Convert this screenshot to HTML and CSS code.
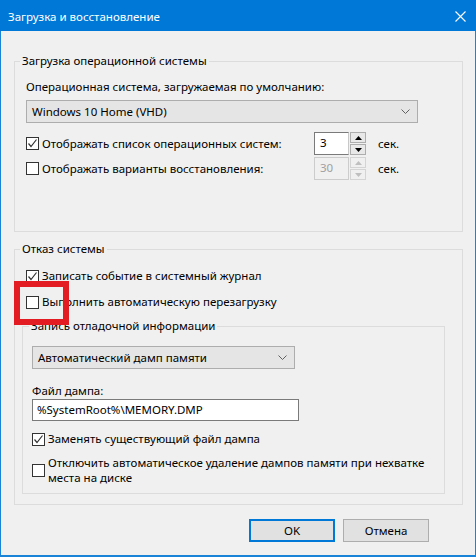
FILE: index.html
```html
<!DOCTYPE html>
<html lang="ru">
<head>
<meta charset="utf-8">
<title>Загрузка и восстановление</title>
<link rel="stylesheet" href="styles.css">
</head>
<body>
<div class="window">
  <div class="titlebar">
    <span class="title">Загрузка и восстановление</span>
    <svg class="close" width="11" height="11" viewBox="0 0 11 11"><path d="M0.5 0.5 L10.5 10.5 M10.5 0.5 L0.5 10.5" stroke="#fff" stroke-width="1.1" fill="none"/></svg>
  </div>
  <div class="content">
    <div class="group g1">
      <div class="legend">Загрузка операционной системы</div>
      <div class="label l-os">Операционная система, загружаемая по умолчанию:</div>
      <div class="combo wide">
        <span>Windows 10 Home (VHD)</span>
        <svg class="chev" width="9" height="5" viewBox="0 0 9 5"><path d="M0.5 0.5 L4.5 4.5 L8.5 0.5" stroke="#606060" fill="none"/></svg>
      </div>
      <div class="srow r1">
        <span class="cb checked"><svg width="11" height="11" viewBox="0 0 11 11"><path d="M1.5 5.5 L4 8.5 L9.5 1.5" stroke="#333" stroke-width="1.2" fill="none"/></svg></span>
        <span class="slabel">Отображать список операционных систем:</span>
        <span class="spin">
          <span class="spin-val">3</span>
          <span class="spin-btns">
            <span class="sbtn"><svg width="7" height="4" viewBox="0 0 7 4"><path d="M0 4 L3.5 0 L7 4Z" fill="#000"/></svg></span>
            <span class="sbtn"><svg width="7" height="4" viewBox="0 0 7 4"><path d="M0 0 L3.5 4 L7 0Z" fill="#000"/></svg></span>
          </span>
        </span>
        <span class="unit">сек.</span>
      </div>
      <div class="srow r2">
        <span class="cb"></span>
        <span class="slabel">Отображать варианты восстановления:</span>
        <span class="spin disabled">
          <span class="spin-val">30</span>
          <span class="spin-btns">
            <span class="sbtn"><svg width="7" height="4" viewBox="0 0 7 4"><path d="M0 4 L3.5 0 L7 4Z" fill="#bfbfbf"/></svg></span>
            <span class="sbtn"><svg width="7" height="4" viewBox="0 0 7 4"><path d="M0 0 L3.5 4 L7 0Z" fill="#bfbfbf"/></svg></span>
          </span>
        </span>
        <span class="unit">сек.</span>
      </div>
    </div>

    <div class="group g2">
      <div class="legend">Отказ системы</div>
      <div class="crow c1">
        <span class="cb checked"><svg width="11" height="11" viewBox="0 0 11 11"><path d="M1.5 5.5 L4 8.5 L9.5 1.5" stroke="#333" stroke-width="1.2" fill="none"/></svg></span>
        <span>Записать событие в системный журнал</span>
      </div>
      <div class="crow c2">
        <span class="cb"></span>
        <span>Выполнить автоматическую перезагрузку</span>
        <span class="highlight"></span>
      </div>
      <div class="group sub">
        <div class="legend">Запись отладочной информации</div>
        <div class="combo narrow">
          <span>Автоматический дамп памяти</span>
          <svg class="chev" width="9" height="5" viewBox="0 0 9 5"><path d="M0.5 0.5 L4.5 4.5 L8.5 0.5" stroke="#606060" fill="none"/></svg>
        </div>
        <div class="label l-file">Файл дампа:</div>
        <div class="textbox">%SystemRoot%\MEMORY.DMP</div>
        <div class="crow c3">
          <span class="cb checked"><svg width="11" height="11" viewBox="0 0 11 11"><path d="M1.5 5.5 L4 8.5 L9.5 1.5" stroke="#333" stroke-width="1.2" fill="none"/></svg></span>
          <span>Заменять существующий файл дампа</span>
        </div>
        <div class="crow c4">
          <span class="cb"></span>
          <span class="multi">Отключить автоматическое удаление дампов памяти при нехватке места на диске</span>
        </div>
      </div>
    </div>

    <div class="buttons">
      <span class="btn default">OK</span>
      <span class="btn">Отмена</span>
    </div>
  </div>
</div>
</body>
</html>
```
FILE: styles.css
```css
html, body {
  margin: 0;
  padding: 0;
  background: #f0f0f0;
}
body {
  font-family: "Segoe UI", "Noto Sans", "Open Sans", sans-serif;
  font-size: 11.5px;
  color: #000;
}
.window {
  width: 476px;
  height: 557px;
  box-sizing: border-box;
  border: 1px solid #1883d7;
  border-top: none;
  border-bottom-width: 2px;
  background: #f0f0f0;
  display: flex;
  flex-direction: column;
}
.titlebar {
  height: 31px;
  background: #0078d7;
  color: #fff;
  display: flex;
  align-items: center;
  justify-content: space-between;
  padding: 0 10px 0 8px;
  margin: 0 -1px;
  font-size: 11.5px;
}
.title { padding-top: 1px; }
.close { margin-top: 1px; }
.content {
  padding: 30px 12px 0 13px;
  display: flex;
  flex-direction: column;
}
.group {
  border: 1px solid #dcdcdc;
}
.legend {
  display: table;
  background: #f0f0f0;
  line-height: 16px;
  height: 16px;
  padding: 0 2px;
  margin-top: -9px;
}
.g1 {
  padding: 0 11px 51px 11px;
}
.g1 > .legend { margin-left: -6px; }
.label { line-height: 16px; }
.l-os { margin-top: 10px; }
.combo {
  height: 23px;
  box-sizing: border-box;
  border: 1px solid #adadad;
  background: #e5e5e5;
  display: flex;
  align-items: center;
  justify-content: space-between;
  padding: 0 7px 0 5px;
}
.combo.wide { margin-top: 5px; width: 392px; }
.srow {
  display: flex;
  align-items: center;
  height: 23px;
}
.r1 { margin-top: 9px; }
.r2 { margin-top: 2px; }
.cb {
  width: 13px;
  height: 13px;
  box-sizing: border-box;
  border: 1px solid #333;
  background: #fff;
  display: inline-flex;
  align-items: center;
  justify-content: center;
  flex: none;
}
.slabel {
  margin-left: 3px;
  width: 272px;
}
.spin {
  display: flex;
  width: 52px;
  height: 23px;
  gap: 1px;
}
.spin-val {
  width: 35px;
  box-sizing: border-box;
  border: 1px solid #7a7a7a;
  border-right-color: #c8c8c8;
  background: #fff;
  padding: 2px 0 0 5px;
  line-height: 16px;
}
.spin-btns {
  display: flex;
  flex-direction: column;
  gap: 1px;
  width: 16px;
}
.sbtn {
  flex: 1;
  box-sizing: border-box;
  border: 1px solid #adadad;
  background: #e8e8e8;
  display: flex;
  align-items: center;
  justify-content: center;
}
.spin.disabled .spin-val {
  border-color: #cccccc;
  background: #f0f0f0;
  color: #a0a0a0;
}
.spin.disabled .sbtn {
  border-color: #d4d4d4;
  background: #f0f0f0;
}
.unit { margin-left: 12px; }

.g2 {
  margin-top: 17px;
  padding: 0 17px 10px 7px;
}
.g2 > .legend { margin-left: -2px; }
.crow {
  display: flex;
  align-items: center;
  gap: 3px;
  line-height: 16px;
  position: relative;
}
.g2 > .crow { margin-left: 4px; }
.c1 { margin-top: 11px; }
.c2 { margin-top: 10px; }
.highlight {
  position: absolute;
  left: -12px;
  top: -13px;
  width: 55px;
  height: 44px;
  box-sizing: border-box;
  border: 6px solid #e31b23;
  pointer-events: none;
}
.sub {
  margin-top: 16px;
  padding: 0 9px 8px 9px;
}
.sub > .legend { margin-left: -3px; }
.combo.narrow { margin-top: 12px; width: 263px; }
.l-file { margin-top: 14px; }
.textbox {
  width: 267px;
  height: 22px;
  box-sizing: border-box;
  border: 1px solid #7a7a7a;
  background: #fff;
  padding: 2px 0 0 4px;
  line-height: 16px;
}
.c3 { margin-top: 10px; }
.c4 { margin-top: 8px; }
.multi { line-height: 15px; width: 392px; }

.buttons {
  display: flex;
  gap: 8px;
  margin-top: 14px;
  padding-left: 235px;
}
.btn {
  width: 86px;
  height: 23px;
  box-sizing: border-box;
  border: 1px solid #adadad;
  background: #e1e1e1;
  display: flex;
  align-items: center;
  justify-content: center;
}
.btn.default {
  border: 2px solid #0078d7;
}
```
